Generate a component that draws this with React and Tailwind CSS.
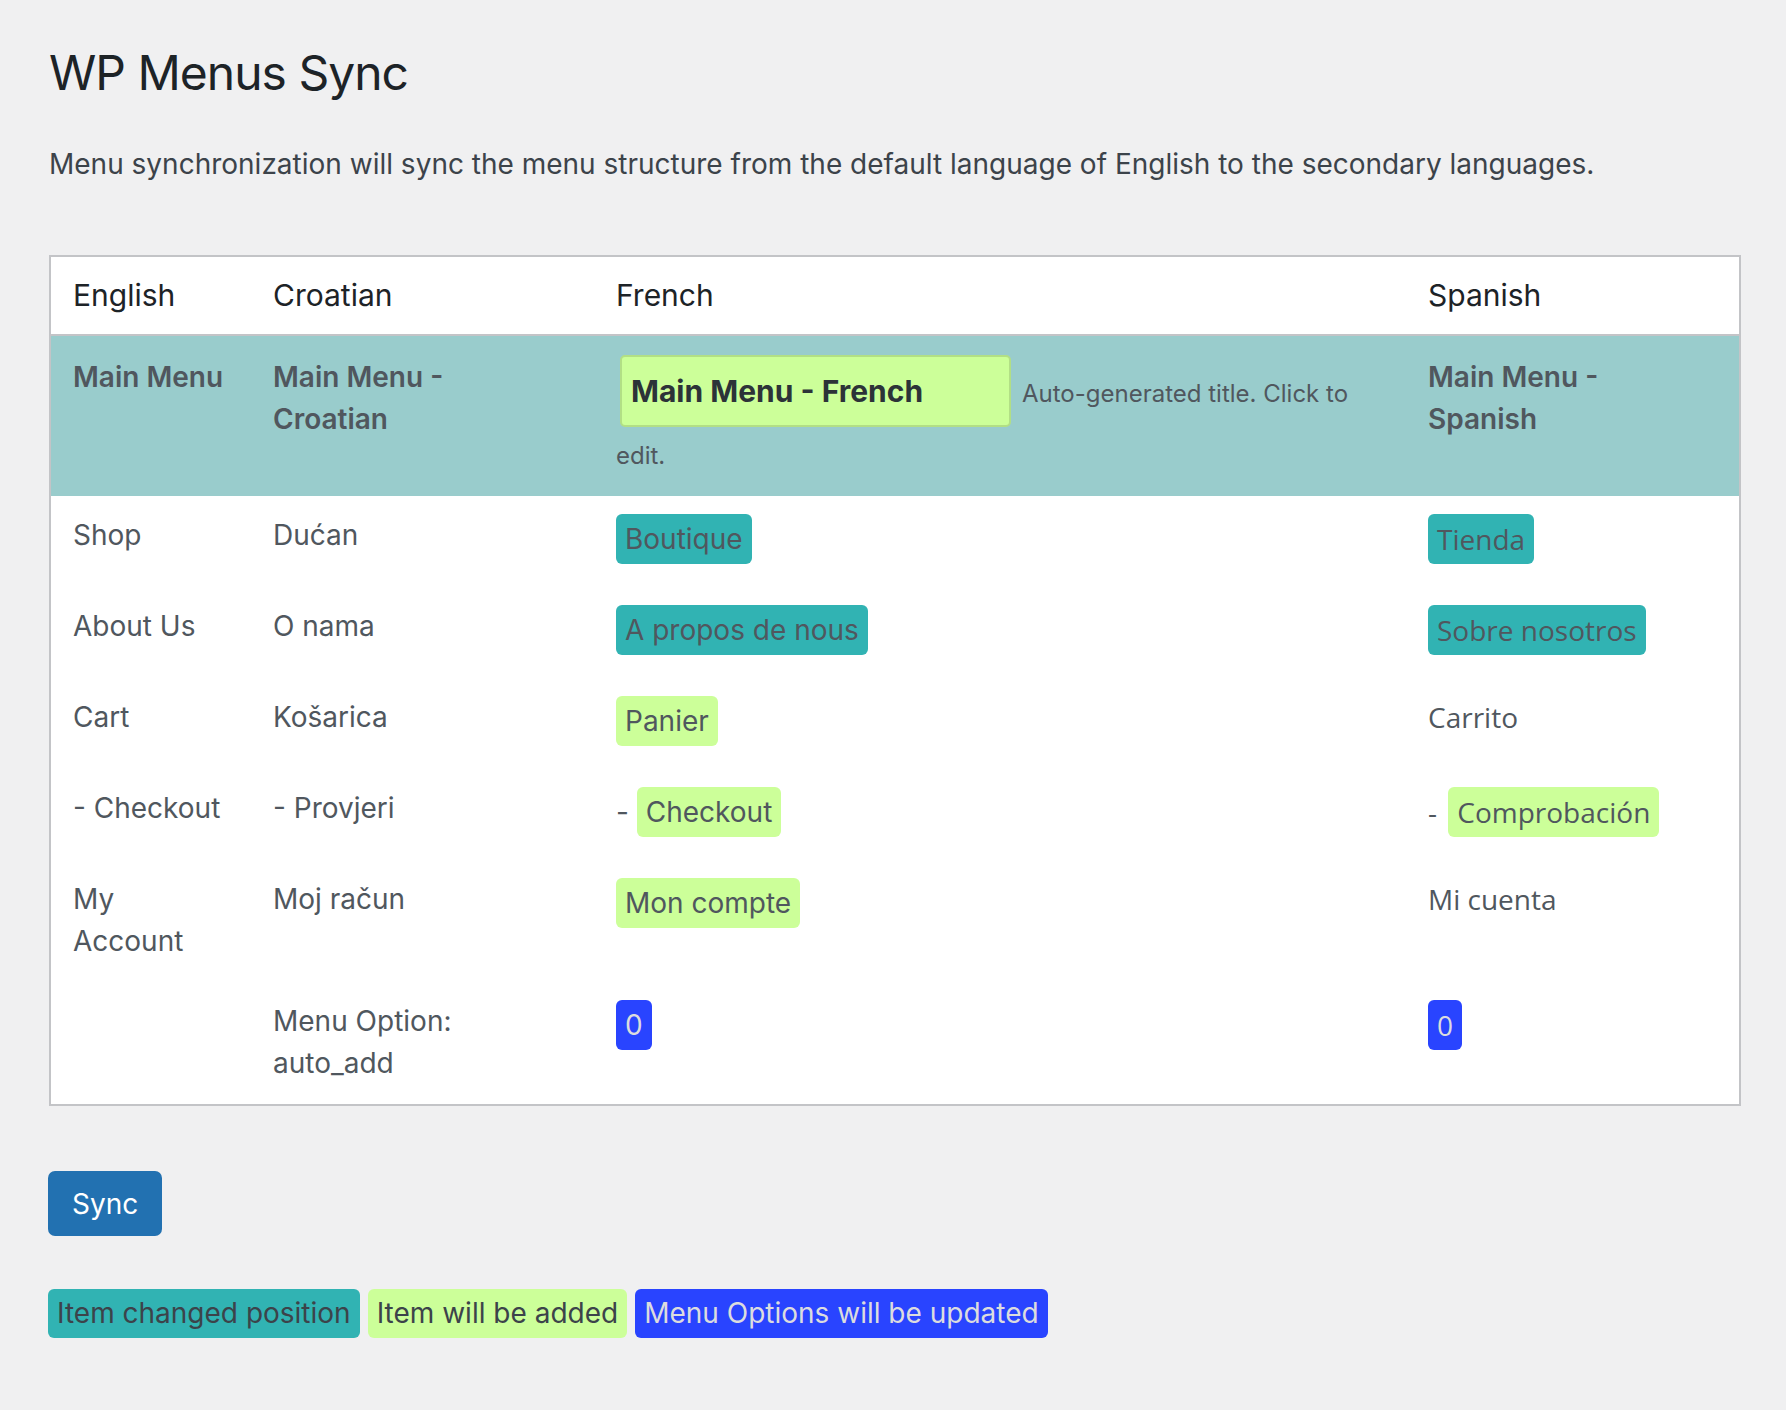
import React from "react";

const teal = "inline-block rounded-[6px] bg-[#31b3b3] px-[9px] py-[8px] leading-[34px]";
const green = "inline-block rounded-[6px] bg-[#ccff99] px-[9px] py-[8px] leading-[34px]";
const blue = "inline-block rounded-[6px] bg-[#2944ff] px-[9px] py-[8px] leading-[34px] text-[#dcdcde]";
const es = "font-['Open_Sans',sans-serif]";

function Row({ children, h = "h-[91px]" }) {
  return <tr className={h}>{children}</tr>;
}

function Td({ children, className = "" }) {
  return (
    <td className={`align-top pl-[22px] pr-[12px] pt-[18px] pb-[20px] ${className}`}>{children}</td>
  );
}

export default function App() {
  return (
    <div className="min-h-[1410px] bg-[#f0f0f1] pl-[49px] pt-[42px] font-['Inter',sans-serif]">
      <h1 className="text-[48px] leading-[1.3] tracking-[-1px] font-normal text-[#1d2327]">WP Menus Sync</h1>
      <p className="mt-[39px] text-[28px] leading-[1.5] text-[#3c434a]">
        Menu synchronization will sync the menu structure from the default language of English to the secondary languages.
      </p>

      <table className="mt-[70px] w-[1692px] table-fixed border-separate border-spacing-0 border-2 border-[#c3c4c7] bg-white text-[28px] leading-[42px] text-[#50575e]">
        <colgroup>
          <col className="w-[200px]" />
          <col className="w-[343px]" />
          <col className="w-[812px]" />
          <col className="w-[333px]" />
        </colgroup>
        <thead>
          <tr>
            {["English", "Croatian", "French", "Spanish"].map((t) => (
              <th
                key={t}
                className="pl-[22px] pt-[17px] pb-[18px] text-left text-[30px] font-normal text-[#1d2327] border-b-2 border-[#c3c4c7]"
              >
                {t}
              </th>
            ))}
          </tr>
        </thead>
        <tbody>
          <tr className="h-[160px] bg-[#99cccc] font-semibold">
            <td className="align-top pl-[22px] pt-[20px]">Main Menu</td>
            <td className="align-top pl-[22px] pt-[20px]">
              <span className="block max-w-[200px]">Main Menu - Croatian</span>
            </td>
            <td className="align-top pl-[22px] pr-[12px] pt-[19px]">
              <span className="ml-[4px] inline-block h-[72px] w-[391px] rounded-[5px] border-2 border-[#b2df85] bg-[#ccff99] px-[9px] align-baseline text-[30px] leading-[68px] font-bold text-[#2c3338]">
                Main Menu - French
              </span>
              <span className="ml-[11px] text-[24px] leading-[58px] font-normal text-[#50575e]">
                Auto-generated title. Click to edit.
              </span>
            </td>
            <td className="align-top pl-[22px] pt-[20px]">
              <span className="block max-w-[200px]">Main Menu - Spanish</span>
            </td>
          </tr>

          <Row>
            <Td>Shop</Td>
            <Td>Dućan</Td>
            <Td><span className={teal}>Boutique</span></Td>
            <Td className={es}><span className={teal}>Tienda</span></Td>
          </Row>
          <Row>
            <Td>About Us</Td>
            <Td>O nama</Td>
            <Td><span className={teal}>A propos de nous</span></Td>
            <Td className={es}><span className={teal}>Sobre nosotros</span></Td>
          </Row>
          <Row>
            <Td>Cart</Td>
            <Td>Košarica</Td>
            <Td><span className={green}>Panier</span></Td>
            <Td className={es}>Carrito</Td>
          </Row>
          <Row>
            <Td>- Checkout</Td>
            <Td>- Provjeri</Td>
            <Td>- <span className={green}>Checkout</span></Td>
            <Td className={es}>- <span className={`${green} ml-[4px]`}>Comprobación</span></Td>
          </Row>
          <Row>
            <Td><span className="block max-w-[120px]">My Account</span></Td>
            <Td>Moj račun</Td>
            <Td><span className={green}>Mon compte</span></Td>
            <Td className={es}>Mi cuenta</Td>
          </Row>
          <Row>
            <Td></Td>
            <Td><span className="block max-w-[200px]">Menu Option: auto_add</span></Td>
            <Td><span className={blue}>0</span></Td>
            <Td className={es}><span className={blue}>0</span></Td>
          </Row>
        </tbody>
      </table>

      <button className="mt-[65px] ml-[-1px] block h-[65px] rounded-[7px] bg-[#2271b1] px-[24px] text-[28px] text-white">
        Sync
      </button>

      <div className="mt-[53px] ml-[-1px] flex gap-[8px] text-[28px] text-[#3c434a]">
        <span className="inline-block rounded-[6px] bg-[#31b3b3] px-[9px] py-[7px] leading-[35px]">Item changed position</span>
        <span className="inline-block rounded-[6px] bg-[#ccff99] px-[9px] py-[7px] leading-[35px]">Item will be added</span>
        <span className="inline-block rounded-[6px] bg-[#2944ff] px-[9px] py-[7px] leading-[35px] text-[#dcdcde]">Menu Options will be updated</span>
      </div>
    </div>
  );
}
